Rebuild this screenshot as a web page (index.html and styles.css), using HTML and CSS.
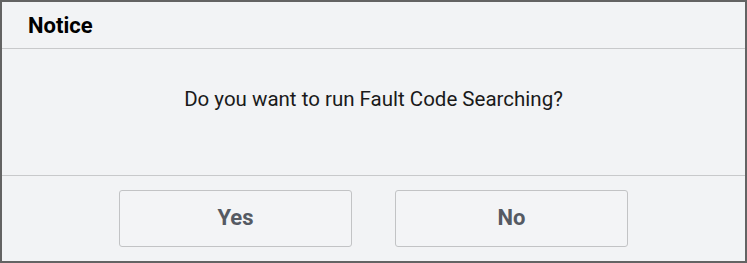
FILE: index.html
```html
<!DOCTYPE html>
<html>
<head>
<meta charset="utf-8">
<link rel="stylesheet" href="styles.css">
</head>
<body>
<div class="dialog">
  <div class="header">Notice</div>
  <div class="message">Do you want to run Fault Code Searching?</div>
  <div class="footer">
    <button class="btn">Yes</button>
    <button class="btn">No</button>
  </div>
</div>
</body>
</html>
```
FILE: styles.css
```css
html, body {
  margin: 0;
  padding: 0;
}
body {
  font-family: Roboto, "Liberation Sans", sans-serif;
  background: #f2f3f5;
}
.dialog {
  box-sizing: border-box;
  width: 747px;
  height: 263px;
  border: 2px solid #636363;
  background: #f2f3f5;
  display: flex;
  flex-direction: column;
}
.header {
  height: 46px;
  border-bottom: 1px solid #c8c9cb;
  padding-left: 26px;
  display: flex;
  align-items: center;
  font-size: 22px;
  font-weight: 700;
  color: #000;
}
.message {
  box-sizing: border-box;
  height: 127px;
  padding-bottom: 26px;
  border-bottom: 1px solid #c8c9cb;
  display: flex;
  align-items: center;
  justify-content: center;
  font-size: 20.5px;
  color: #1a1a1a;
}
.footer {
  flex: 1;
  display: flex;
  justify-content: center;
  align-items: flex-start;
  padding-top: 14px;
  gap: 43px;
}
.btn {
  width: 233px;
  height: 57px;
  border: 1px solid #c2c3c5;
  border-radius: 3px;
  background: #f3f4f6;
  font-family: Roboto, "Liberation Sans", sans-serif;
  font-size: 22px;
  font-weight: 700;
  color: #555a63;
  padding-bottom: 3px;
}
```
